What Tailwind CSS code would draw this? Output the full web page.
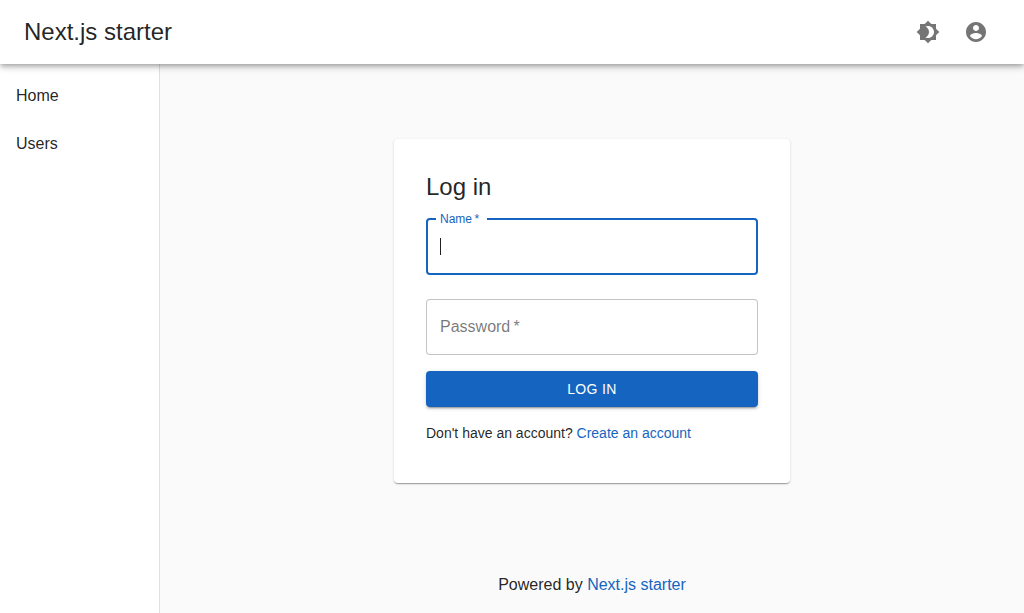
<!DOCTYPE html>
<html lang="en">
<head>
<meta charset="utf-8">
<meta name="viewport" content="width=device-width, initial-scale=1">
<title>Next.js starter</title>
<script src="https://cdn.jsdelivr.net/npm/@tailwindcss/browser@4"></script>
</head>
<body class="flex min-h-screen flex-col bg-[#fafafa] font-['Liberation_Sans',Arial,sans-serif] text-base text-black/87">
  <header class="relative z-10 flex h-16 items-center justify-between bg-white px-6 shadow-[0_2px_4px_-1px_rgba(0,0,0,0.2),0_4px_5px_0_rgba(0,0,0,0.14),0_1px_10px_0_rgba(0,0,0,0.12)]">
    <h1 class="text-2xl">Next.js starter</h1>
    <div class="flex text-black/54">
      <button type="button" aria-label="Toggle theme" class="rounded-full p-3">
        <svg class="size-6 fill-current" viewBox="0 0 24 24"><path d="M20 15.310 23.310 12 20 8.690V4h-4.690L12 .690 8.690 4H4v4.690L.690 12 4 15.310V20h4.690L12 23.310 15.310 20H20v-4.690zM12 18c-.890 0-1.740-.200-2.500-.550C11.560 16.500 13 14.420 13 12s-1.440-4.500-3.500-5.450C10.260 6.200 11.110 6 12 6c3.310 0 6 2.690 6 6s-2.690 6-6 6z"/></svg>
      </button>
      <button type="button" aria-label="Account" class="rounded-full p-3">
        <svg class="size-6 fill-current" viewBox="0 0 24 24"><path d="M12 2C6.480 2 2 6.480 2 12s4.480 10 10 10 10-4.480 10-10S17.520 2 12 2zm0 3c1.660 0 3 1.340 3 3s-1.340 3-3 3-3-1.340-3-3 1.340-3 3-3zm0 14.200c-2.500 0-4.710-1.280-6-3.220.03-1.990 4-3.080 6-3.080 1.990 0 5.970 1.090 6 3.080-1.290 1.940-3.500 3.220-6 3.220z"/></svg>
      </button>
    </div>
  </header>

  <div class="flex grow">
    <nav aria-label="Main" class="w-40 shrink-0 border-r border-black/12 bg-white py-2">
      <ul>
        <li><a href="#home" class="block px-4 py-3">Home</a></li>
        <li><a href="#users" class="block px-4 py-3">Users</a></li>
      </ul>
    </nav>

    <div class="flex grow flex-col">
      <main class="flex grow items-center justify-center px-4">
        <section class="w-full max-w-[396px] rounded bg-white px-8 pt-8 pb-10 shadow-[0_2px_1px_-1px_rgba(0,0,0,0.2),0_1px_1px_0_rgba(0,0,0,0.14),0_1px_3px_0_rgba(0,0,0,0.12)]">
          <h2 class="text-2xl">Log in</h2>
          <form class="flex flex-col pt-[15px]">
            <div class="relative">
              <input id="name" name="name" type="text" required autofocus placeholder=" " class="peer block h-[57px] w-full rounded border-2 border-[#1565c0] bg-white px-3 outline-none placeholder-shown:caret-transparent">
              <!-- Caret of the empty field -->
              <span aria-hidden="true" class="pointer-events-none absolute top-5 left-[14px] hidden h-[17px] w-px bg-black/87 peer-placeholder-shown:block"></span>
              <label for="name" class="absolute -top-[7px] left-[10px] bg-white pr-2 pl-1 text-xs text-[#1565c0]">Name&thinsp;*</label>
            </div>
            <div class="relative mt-6">
              <input id="password" name="password" type="password" required class="block h-14 w-full rounded border border-black/23 bg-white px-[13px] outline-none">
              <label for="password" class="absolute top-4 left-[14px] text-black/54">Password&thinsp;*</label>
            </div>
            <button type="submit" class="mt-4 h-9 rounded bg-[#1565c0] text-sm font-medium tracking-wide text-white uppercase shadow-[0_3px_1px_-2px_rgba(0,0,0,0.2),0_2px_2px_0_rgba(0,0,0,0.14),0_1px_5px_0_rgba(0,0,0,0.12)]">Log in</button>
          </form>
          <p class="mt-4 text-sm">Don't have an account? <a href="#register" class="text-[#1565c0]">Create an account</a></p>
        </section>
      </main>
      <footer class="p-4 text-center">Powered by <a href="#starter" class="text-[#1565c0]">Next.js starter</a></footer>
    </div>
  </div>
</body>
</html>
